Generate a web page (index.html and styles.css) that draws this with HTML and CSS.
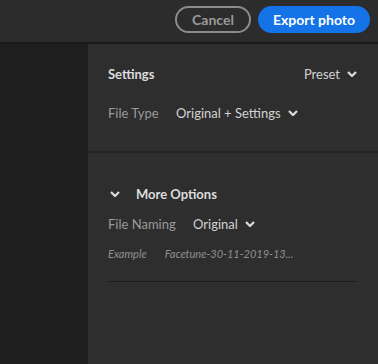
FILE: index.html
```html
<!DOCTYPE html>
<html lang="en">

<head>
    <meta charset="UTF-8">
    <meta name="viewport" content="width=device-width, initial-scale=1.0">
    <title>Export</title>
    <link rel="stylesheet" href="styles.css">
</head>

<body>

    <div class="topbar">
        <button class="button buttonCancel">Cancel</button>
        <button class="button buttonExport">Export photo</button>
    </div>

    <div class="main">
        <div class="preview"></div>
        <div class="panel">
            <div class="section sectionSettings">
                <div class="row rowHead">
                    <div class="title">Settings</div>
                    <div class="select">Preset
                        <svg class="chevron" viewBox="0 0 10 6"><path d="M1 1l4 4 4-4"/></svg>
                    </div>
                </div>
                <div class="row">
                    <div class="label">File Type</div>
                    <div class="select">Original + Settings
                        <svg class="chevron" viewBox="0 0 10 6"><path d="M1 1l4 4 4-4"/></svg>
                    </div>
                </div>
            </div>

            <div class="section sectionMore">
                <div class="row rowToggle">
                    <svg class="chevron chevronToggle" viewBox="0 0 10 6"><path d="M1 1l4 4 4-4"/></svg>
                    <div class="title">More Options</div>
                </div>
                <div class="row">
                    <div class="label">File Naming</div>
                    <div class="select">Original
                        <svg class="chevron" viewBox="0 0 10 6"><path d="M1 1l4 4 4-4"/></svg>
                    </div>
                </div>
                <div class="row rowExample">
                    <div class="example">Example</div>
                    <div class="example">Facetune-30-11-2019-13...</div>
                </div>
                <div class="divider"></div>
            </div>
        </div>
    </div>

</body>

</html>
```

FILE: styles.css
```css
body {
    margin: 0;
    background: #2e2e2e;
    font-family: 'Lato', sans-serif;
    height: 364px;
    overflow: hidden;
}

.topbar {
    height: 42px;
    background: #2c2c2c;
    border-bottom: 2px solid #1b1b1b;
    display: flex;
    justify-content: flex-end;
    align-items: center;
    gap: 7px;
    padding-right: 8px;
    box-sizing: content-box;
}

.button {
    height: 27px;
    border-radius: 14px;
    font-family: 'Lato', sans-serif;
    font-size: 14px;
    font-weight: 700;
    margin-top: -3px;
}

.buttonCancel {
    width: 76px;
    background: transparent;
    border: 2px solid #8c8c8c;
    color: #9a9a9a;
}

.buttonExport {
    width: 112px;
    background: #1473e6;
    border: none;
    color: #ffffff;
}

.main {
    display: flex;
    height: 320px;
}

.preview {
    width: 88px;
    background: #1e1e1e;
}

.panel {
    flex: 1;
    background: #2e2e2e;
}

.section {
    padding: 0 21px 0 20px;
}

.sectionSettings {
    height: 109px;
    border-bottom: 2px solid #232323;
    padding-top: 19px;
    box-sizing: border-box;
}

.row {
    display: flex;
    align-items: center;
    height: 22px;
}

.rowHead {
    justify-content: space-between;
    margin-bottom: 17px;
}

.title {
    color: #dcdcdc;
    font-size: 13px;
    font-weight: 700;
}

.label {
    color: #9a9a9a;
    font-size: 13px;
    width: 68px;
}

.select {
    display: flex;
    align-items: center;
    gap: 7px;
    color: #d2d2d2;
    font-size: 13px;
}

.chevron {
    width: 10px;
    height: 6px;
    fill: none;
    stroke: #dcdcdc;
    stroke-width: 2.2;
}

.sectionMore {
    padding-top: 30px;
}

.rowToggle {
    gap: 16px;
    padding-left: 2px;
    margin-bottom: 8px;
}

.sectionMore .label {
    width: 85px;
}

.rowExample {
    margin-top: 7px;
    gap: 18px;
}

.example {
    color: #8e8e8e;
    font-size: 11px;
    font-style: italic;
}

.divider {
    margin-top: 17px;
    height: 1px;
    background: #1c1c1c;
}
```
